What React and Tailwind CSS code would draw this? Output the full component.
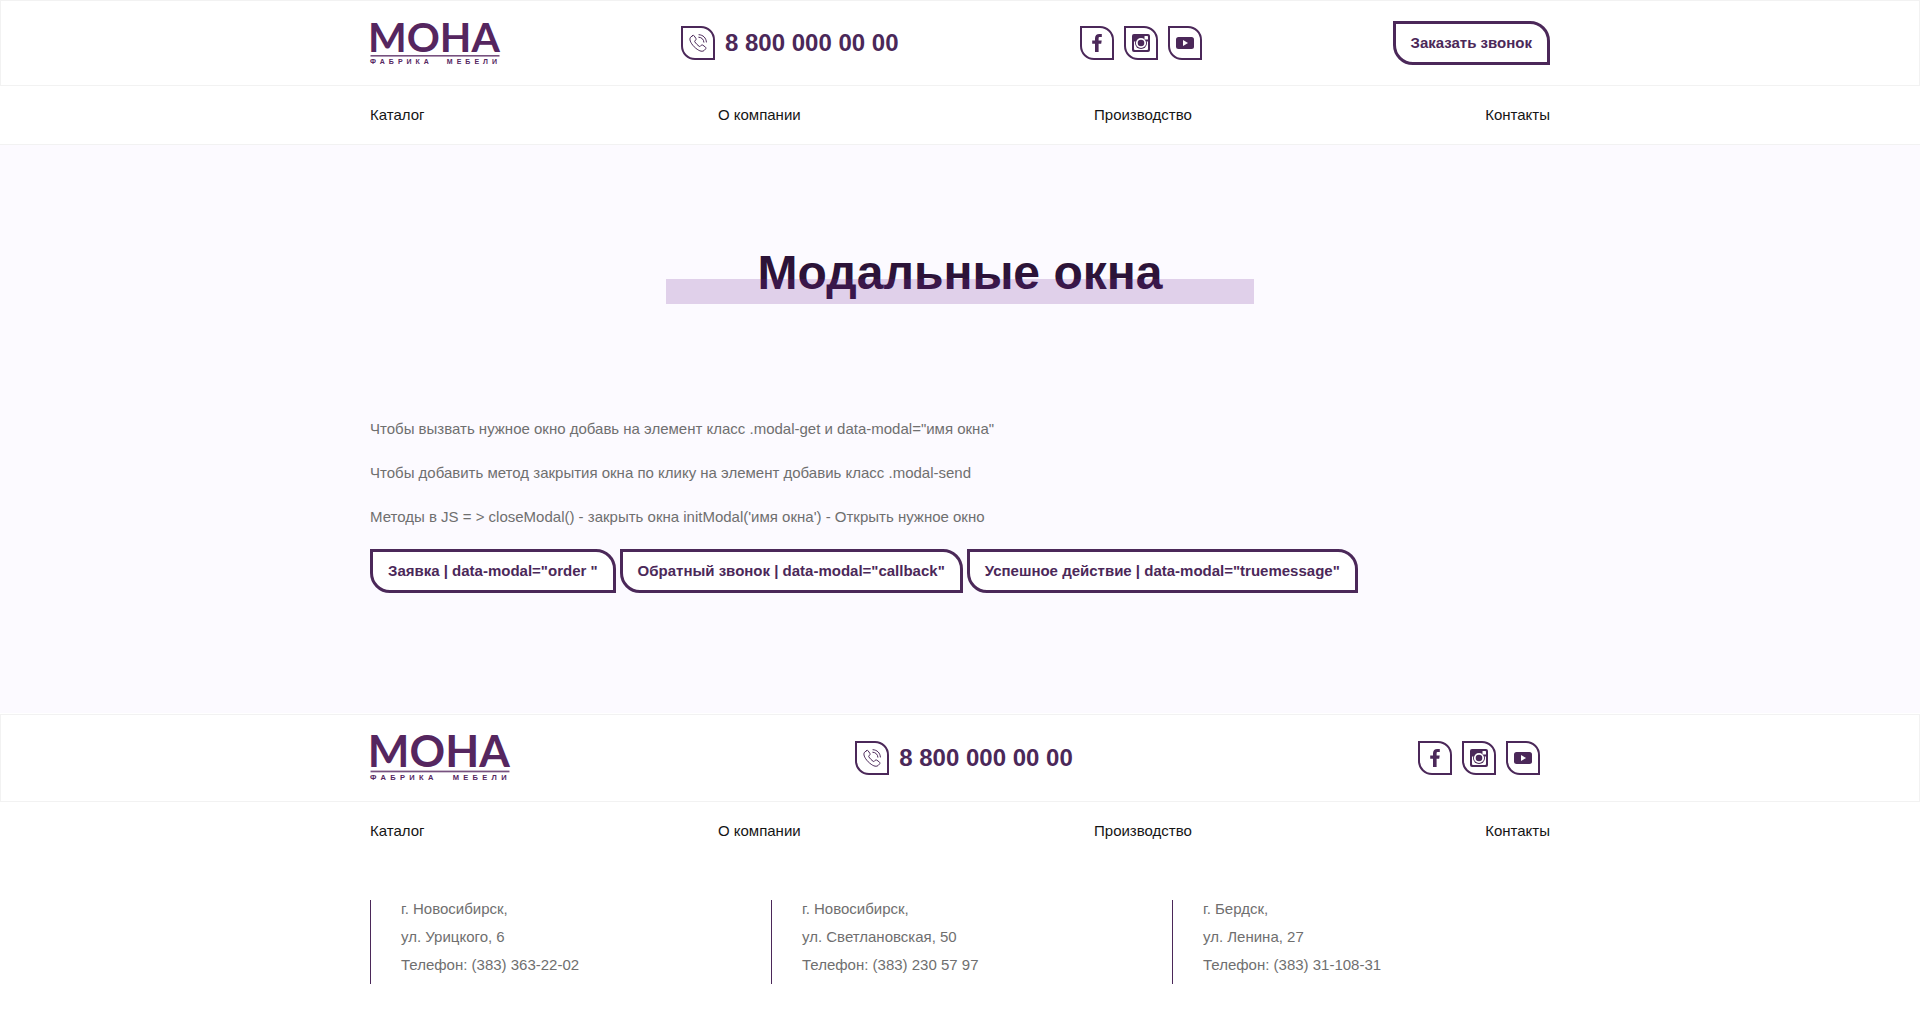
const NAV = ["Каталог", "О компании", "Производство", "Контакты"];

const ADDRESSES = [
  ["г. Новосибирск,", "ул. Урицкого, 6", "Телефон: (383) 363-22-02"],
  ["г. Новосибирск,", "ул. Светлановская, 50", "Телефон: (383) 230 57 97"],
  ["г. Бердск,", "ул. Ленина, 27", "Телефон: (383) 31-108-31"],
];

function Logo({ className }) {
  return (
    <svg viewBox="0 0 130 44" className={className} fill="#55265f" fontWeight="700" role="img" aria-label="МОНА фабрика мебели">
      <text x="-2" y="31" fontSize="41" fontFamily="Lato, sans-serif">
        МОНА
      </text>
      <rect x="0.500" y="34" width="129" height="1.600" opacity="0.8" />
      <text x="0" y="43" fontSize="7" letterSpacing="4" wordSpacing="8" fontFamily="'Liberation Sans', Arial, sans-serif">
        ФАБРИКА МЕБЕЛИ
      </text>
    </svg>
  );
}

function Leaf({ children }) {
  return (
    <span className="flex size-[34px] items-center justify-center rounded-tr-[14px] rounded-bl-[14px] border-2 border-[#4b2859] text-[#4b2859]">
      {children}
    </span>
  );
}

function PhoneIcon() {
  return (
    <svg viewBox="0 0 18 18" className="size-[18px]" fill="none" stroke="currentColor" strokeWidth="1" strokeLinecap="round" strokeLinejoin="round">
      <path d="M3.600 1.600 L1.600 3.200 C0 5 1.200 8.600 5.200 12.800 C9.400 16.800 12.800 18.200 15 16.600 L16.600 14.900 C17.100 14.300 17 13.700 16.500 13.200 L13.800 11.100 C13.200 10.700 12.600 10.800 12.200 11.300 L11.300 12.300 C10.900 12.600 10.500 12.600 10 12.200 C8.600 11.200 7 9.600 5.900 8 C5.600 7.500 5.600 7.200 5.900 6.900 L6.800 5.900 C7.200 5.500 7.200 4.900 6.900 4.400 L5.100 1.800 C4.700 1.200 4.100 1.200 3.600 1.600 Z" />
      <path d="M10 0.700 C14.200 0.900 17.100 3.900 17.400 8" />
      <path d="M9.800 3.200 C12.700 3.400 14.700 5.300 14.900 8.200" />
    </svg>
  );
}

function FacebookIcon() {
  return (
    <svg viewBox="0 0 18 18" className="size-[18px]" fill="currentColor">
      <path d="M7 18 V9.800 H4.200 V6.600 H7 V4.300 C7 1.500 8.700 0 11.200 0 L13.800 0.100 V3.100 H12 C10.900 3.100 10.600 3.600 10.600 4.500 V6.600 H13.700 L13.200 9.800 H10.600 V18 Z" />
    </svg>
  );
}

function InstagramIcon() {
  return (
    <svg viewBox="0 0 18 18" className="size-[18px]">
      <rect width="18" height="18" rx="2" fill="currentColor" />
      <path d="M2 7.500 H16 V15 Q16 16 15 16 H3 Q2 16 2 15 Z" fill="#fff" />
      <circle cx="9" cy="9" r="6" fill="currentColor" />
      <circle cx="9" cy="9" r="4.200" fill="none" stroke="#fff" strokeWidth="1.800" />
      <rect x="12.500" y="2" width="3.500" height="3.500" rx="0.600" fill="#fff" />
    </svg>
  );
}

function YoutubeIcon() {
  return (
    <svg viewBox="0 0 18 18" className="size-[18px]">
      <rect y="3" width="18" height="12" rx="2.500" fill="currentColor" />
      <path d="M7 6 L12 9 L7 12 Z" fill="#fff" />
    </svg>
  );
}

function Phone() {
  return (
    <a href="tel:88000000000" className="flex items-center gap-2.5 text-2xl font-bold text-[#4b2859]">
      <Leaf><PhoneIcon /></Leaf>
      8 800 000 00 00
    </a>
  );
}

function Socials() {
  return (
    <div className="flex">
      <a href="#facebook" aria-label="Facebook" className="mr-2.5"><Leaf><FacebookIcon /></Leaf></a>
      <a href="#instagram" aria-label="Instagram" className="mr-2.5"><Leaf><InstagramIcon /></Leaf></a>
      <a href="#youtube" aria-label="YouTube" className="mr-2.5"><Leaf><YoutubeIcon /></Leaf></a>
    </div>
  );
}

function Button({ children }) {
  return (
    <button type="button" className="h-11 rounded-tr-[20px] rounded-bl-[20px] border-3 border-[#4b2859] bg-white px-[15px] text-[15px] font-bold text-[#4b2859]">
      {children}
    </button>
  );
}

function Nav() {
  return (
    <nav className="mx-auto flex max-w-[1180px] justify-between py-[15px] text-[#151515]">
      {NAV.map((item) => <a key={item} href="#">{item}</a>)}
    </nav>
  );
}

export default function App() {
  return (
    <div className="min-h-screen bg-white font-['Liberation_Sans',Arial,sans-serif] text-[15px] leading-7 text-[#6f6f6f]">
      <header>
        <div className="border border-[#f2f2f2] py-5">
          <div className="mx-auto flex h-11 max-w-[1180px] items-center justify-between">
            <a href="#"><Logo className="block w-[130px] overflow-visible" /></a>
            <Phone />
            <Socials />
            <Button>Заказать звонок</Button>
          </div>
        </div>
        <div className="border-b border-[#f2f2f2]"><Nav /></div>
      </header>

      <main className="bg-[#fcfaff] pt-[100px] pb-[120px]">
        <div className="mx-auto max-w-[1180px]">
          <h1 className="relative mx-auto w-fit px-[92px] text-5xl leading-14 font-bold text-[#2c1338]">
            Модальные окна
            <span className="absolute inset-x-0 top-[34px] h-[25px] bg-[#732a94]/20" />
          </h1>
          <div className="mt-[114px] space-y-4">
            <p>Чтобы вызвать нужное окно добавь на элемент класс .modal-get и data-modal="имя окна"</p>
            <p>Чтобы добавить метод закрытия окна по клику на элемент добавиь класс .modal-send</p>
            <p>Методы в JS = &gt; closeModal() - закрыть окна initModal('имя окна') - Открыть нужное окно</p>
          </div>
          <div className="mt-[18px] flex flex-wrap gap-1">
            <Button>Заявка | data-modal="order "</Button>
            <Button>Обратный звонок | data-modal="callback"</Button>
            <Button>Успешное действие | data-modal="truemessage"</Button>
          </div>
        </div>
      </main>

      <footer className="pt-px">
        <div className="border border-[#f2f2f2] py-5">
          <div className="mx-auto flex h-[46px] max-w-[1180px] items-center justify-between">
            <a href="#"><Logo className="block w-[140px] overflow-visible" /></a>
            <Phone />
            <Socials />
          </div>
        </div>
        <Nav />
        <div className="mx-auto mt-10 grid max-w-[1180px] grid-cols-3 gap-[23px]">
          {ADDRESSES.map((lines) => (
            <address key={lines[1]} className="border-l border-[#4b2859] pl-[30px] leading-[18px] not-italic">
              {lines.map((line) => <p key={line} className="pb-2.5">{line}</p>)}
            </address>
          ))}
        </div>
      </footer>
    </div>
  );
}
